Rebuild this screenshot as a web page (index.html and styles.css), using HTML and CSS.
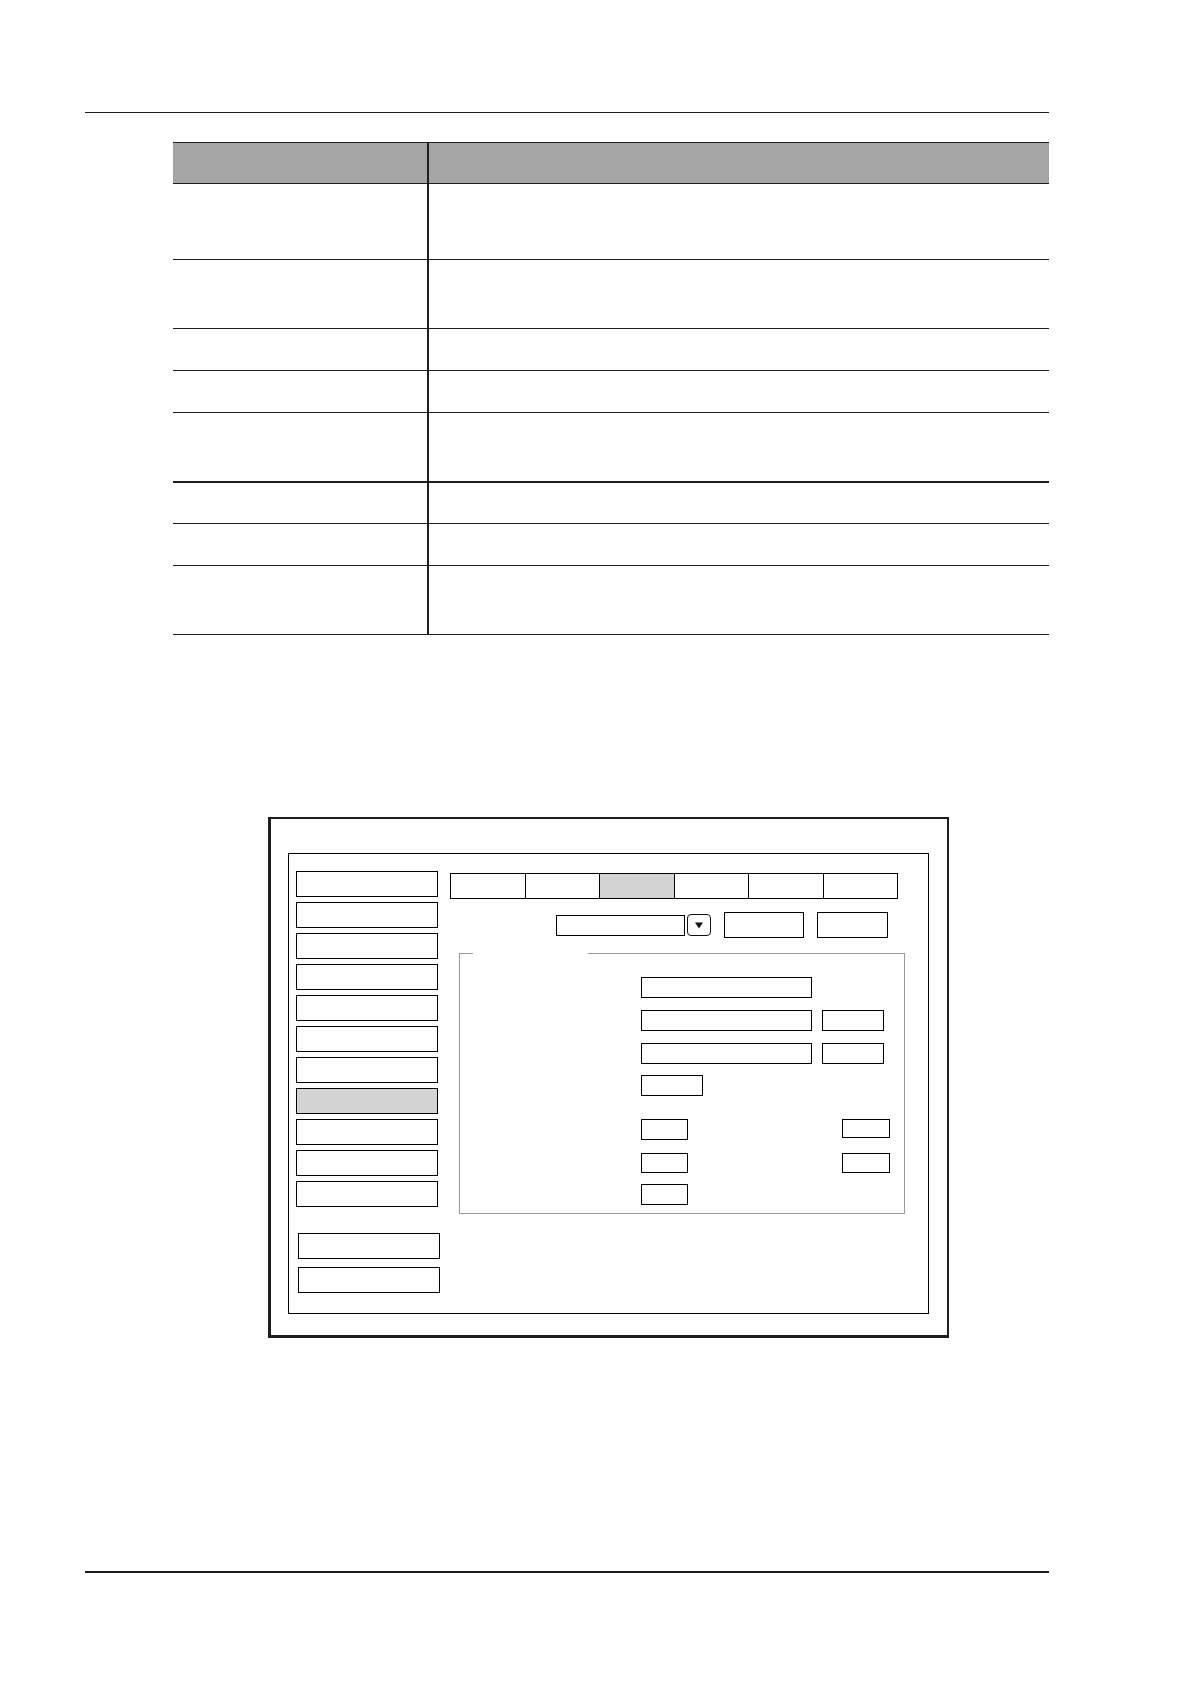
FILE: index.html
```html
<!DOCTYPE html>
<html lang="en">
<head>
<meta charset="utf-8">
<title>Settings page</title>
<link rel="stylesheet" href="styles.css">
</head>
<body>
<div class="page">
  <div class="rule-top"></div>

  <div class="tbl">
    <div class="trow thead"><div class="c1"></div><div class="c2"></div></div>
    <div class="trow h76"><div class="c1"></div><div class="c2"></div></div>
    <div class="trow h69"><div class="c1"></div><div class="c2"></div></div>
    <div class="trow h42"><div class="c1"></div><div class="c2"></div></div>
    <div class="trow h42"><div class="c1"></div><div class="c2"></div></div>
    <div class="trow h70 thick"><div class="c1"></div><div class="c2"></div></div>
    <div class="trow h41"><div class="c1"></div><div class="c2"></div></div>
    <div class="trow h42"><div class="c1"></div><div class="c2"></div></div>
    <div class="trow h69"><div class="c1"></div><div class="c2"></div></div>
  </div>

  <div class="frame">
    <div class="inner">
      <div class="side">
        <div class="menu">
          <div class="mbtn"></div>
          <div class="mbtn"></div>
          <div class="mbtn"></div>
          <div class="mbtn"></div>
          <div class="mbtn"></div>
          <div class="mbtn"></div>
          <div class="mbtn"></div>
          <div class="mbtn sel"></div>
          <div class="mbtn"></div>
          <div class="mbtn"></div>
          <div class="mbtn"></div>
        </div>
        <div class="menu2">
          <div class="mbtn"></div>
          <div class="mbtn"></div>
        </div>
      </div>

      <div class="main">
        <div class="tabs">
          <div class="tab"></div>
          <div class="tab"></div>
          <div class="tab sel"></div>
          <div class="tab"></div>
          <div class="tab"></div>
          <div class="tab"></div>
        </div>

        <div class="toolbar">
          <div class="select"></div>
          <div class="arrow">
            <svg width="10" height="9" viewBox="0 0 10 9"><path d="M1 1.5 L9 1.5 L5 7.5 Z" fill="#111"/></svg>
          </div>
          <div class="abtn w80"></div>
          <div class="abtn w71"></div>
        </div>

        <div class="group">
          <div class="gtop">
            <span class="seg s1"></span><span class="gap"></span><span class="seg s2"></span>
          </div>
          <div class="gbody">
            <div class="frow r1"><div class="fld w171"></div></div>
            <div class="frow r2"><div class="fld w171"></div><div class="fld w62 ml10"></div></div>
            <div class="frow r3"><div class="fld w171"></div><div class="fld w62 ml10"></div></div>
            <div class="frow r4"><div class="fld w62"></div></div>
            <div class="frow r5"><div class="fld w47"></div><div class="fld w48 h19 ml154"></div></div>
            <div class="frow r6"><div class="fld w47 h20"></div><div class="fld w48 h20 ml154"></div></div>
            <div class="frow r7"><div class="fld w47"></div></div>
          </div>
        </div>
      </div>
    </div>
  </div>

  <div class="rule-bottom"></div>
</div>
</body>
</html>
```

FILE: styles.css
```css
* { box-sizing: border-box; }
html, body { margin: 0; padding: 0; background: #ffffff; }
body { font-family: "Liberation Sans", Arial, sans-serif; color: #111; }

.page {
  width: 1191px;
  min-height: 1684px;
  padding: 112px 0 0 85px;
}

.rule-top { width: 964px; height: 1px; background: #1e1e1e; }

/* table */
.tbl {
  margin: 29px 0 0 88px;
  width: 876px;
}
.trow {
  display: grid;
  grid-template-columns: 256px 1fr;
  border-bottom: 1px solid #1e1e1e;
}
.trow .c1 { border-right: 2px solid #1e1e1e; }
.thead { height: 42px; border-top: 1px solid #1e1e1e; background: #a6a5a6; }
.h76 { height: 76px; }
.h69 { height: 69px; }
.h70 { height: 70px; }
.h42 { height: 42px; }
.h41 { height: 41px; }
.thick { border-bottom-width: 2px; }

/* screen frame */
.frame {
  margin: 182px 0 0 183px;
  width: 681px;
  height: 521px;
  border-style: solid;
  border-color: #1e1e1e;
  border-width: 2px 2px 3px 3px;
  padding: 34px 0 0 17px;
}
.inner {
  width: 641px;
  height: 461px;
  border: 1px solid #000;
  padding: 17px 0 0 7px;
  display: flex;
}

.side { width: 144px; display: flex; flex-direction: column; }
.menu { display: flex; flex-direction: column; gap: 5px; }
.menu2 { display: flex; flex-direction: column; gap: 8px; margin: 26px 0 0 2px; }
.mbtn {
  width: 142px;
  height: 26px;
  border: 1px solid #000;
  background: #fff;
}
.mbtn.sel { background: #d3d3d3; }

.main { margin-left: 10px; padding-top: 2px; display: flex; flex-direction: column; }

.tabs { display: flex; width: 448px; }
.tab {
  flex: 1;
  height: 26px;
  border: 1px solid #000;
  background: #fff;
}
.tab + .tab { margin-left: -1px; }
.tab.sel { background: #d3d3d3; }

.toolbar {
  margin-top: 13px;
  height: 26px;
  padding-left: 106px;
  display: flex;
  align-items: center;
}
.select { width: 129px; height: 21px; border: 1px solid #000; }
.arrow {
  width: 24px;
  height: 22px;
  margin-left: 2px;
  border: 1px solid #111;
  border-radius: 4px;
  display: flex;
  align-items: center;
  justify-content: center;
}
.arrow svg { display: block; }
.abtn { height: 26px; border: 1px solid #000; margin-left: 13px; }
.w80 { width: 80px; }
.w71 { width: 71px; }

.group { margin: 15px 0 0 9px; width: 446px; height: 261px; display: flex; flex-direction: column; }
.gtop { display: flex; height: 1px; }
.seg { height: 1px; background: #9a9a9a; }
.s1 { width: 14px; }
.gap { width: 115px; }
.s2 { flex: 1; }
.gbody {
  flex: 1;
  border: 1px solid #9a9a9a;
  border-top: none;
  padding-left: 181px;
}
.frow { display: flex; align-items: flex-start; }
.r1 { margin-top: 23px; }
.r2, .r3 { margin-top: 12px; }
.r4 { margin-top: 11px; }
.r5 { margin-top: 23px; }
.r6 { margin-top: 13px; }
.r7 { margin-top: 11px; }
.fld { height: 21px; border: 1px solid #000; background: #fff; }
.w171 { width: 171px; }
.w62 { width: 62px; }
.w47 { width: 47px; }
.w48 { width: 48px; }
.h19 { height: 19px; }
.h20 { height: 20px; }
.ml10 { margin-left: 10px; }
.ml154 { margin-left: 154px; }

.rule-bottom { margin-top: 233px; width: 964px; height: 2px; background: #1e1e1e; }
```
